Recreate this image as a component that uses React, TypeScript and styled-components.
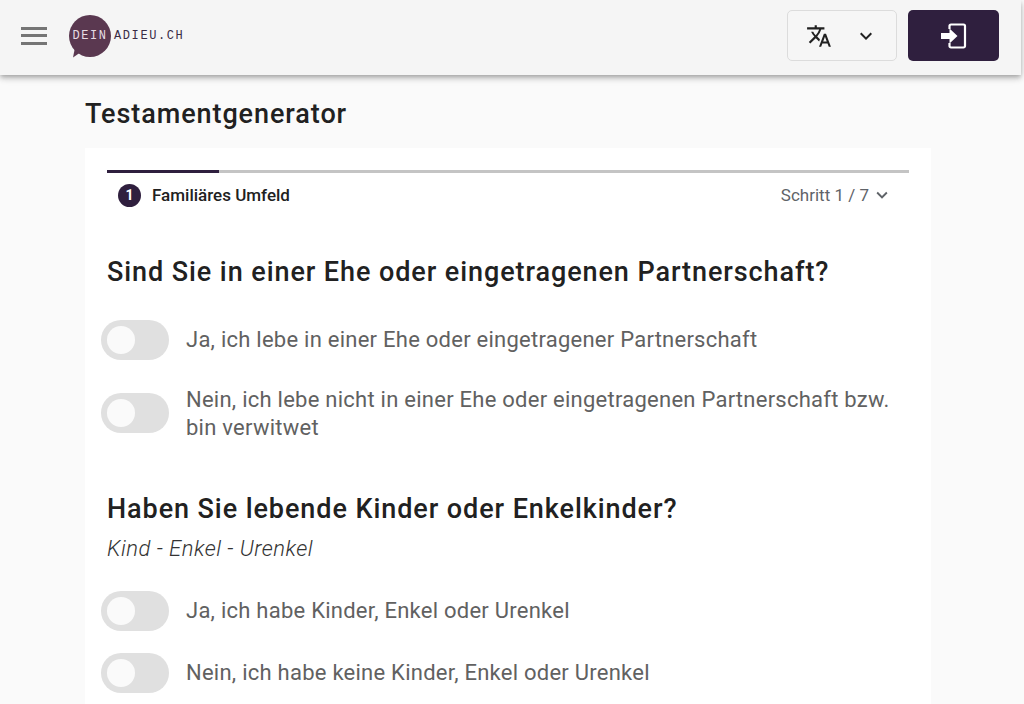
import React from "react";
import styled, { createGlobalStyle } from "styled-components";

const Global = createGlobalStyle`
  html, body { margin: 0; padding: 0; background: #fafafa; overflow: hidden; height: 704px; }
  body { font-family: Roboto, "Liberation Sans", sans-serif; }
`;
const Page = styled.div`width: 1024px; height: 704px; overflow: hidden; display: flex; flex-direction: column;`;
const Header = styled.header`
  width: 1021px; height: 75px; flex: none; background: #f5f5f5; display: flex; align-items: center;
  padding: 0 22px 4px 21px; box-sizing: border-box;
  box-shadow: 0 2px 4px -1px rgba(0,0,0,.2), 0 4px 5px 0 rgba(0,0,0,.14), 0 1px 10px 0 rgba(0,0,0,.12);
  position: relative;
`;
const Menu = styled.div`width: 26px; height: 18px; display: flex; flex-direction: column; justify-content: space-between; margin-right: 22px;`;
const MenuBar = styled.span`height: 3px; background: #757575; display: block;`;
const Logo = styled.div`display: flex; align-items: center; height: 42px; position: relative;`;
const Bubble = styled.div`
  width: 42px; height: 42px; border-radius: 50%; background: #5a3850; color: #e6dce3;
  font: 12px "Liberation Mono", monospace; letter-spacing: 1.6px;
  display: flex; align-items: center; justify-content: center; position: relative;
  &::after { content: ""; position: absolute; left: 4px; bottom: -1px; width: 9px; height: 9px; background: #5a3850; clip-path: polygon(0 100%, 100% 30%, 20% 0); }
`;
const LogoText = styled.span`
  font: 12px "Liberation Mono", monospace; letter-spacing: 1.6px; color: #3a2c45; margin-left: 3px;
`;
const Spacer = styled.div`flex: 1;`;
const LangButton = styled.button`
  width: 110px; height: 51px; box-sizing: border-box; border: 1px solid #dcdcdc; border-radius: 5px; background: #f6f6f6;
  display: flex; align-items: center; justify-content: space-between; padding: 0 18px 0 18px; margin-right: 11px; color: #212121;
`;
const LoginButton = styled.button`
  width: 91px; height: 51px; border: 0; border-radius: 5px; background: #2f1f3e; color: #fff;
  display: flex; align-items: center; justify-content: center; padding: 0;
`;
const Main = styled.main`flex: 1; padding: 0 93px 0 85px; display: flex; flex-direction: column; min-height: 0;`;
const Title = styled.h1`margin: 21px 0 16px; font-size: 27px; line-height: 36px; font-weight: 500; color: #212121; letter-spacing: .92px;`;
const Card = styled.section`background: #fff; padding: 22px 22px 0; flex: 1;`;
const Track = styled.div`height: 3px; background: #c4c4c4;`;
const Fill = styled.div`height: 3px; width: 112px; background: #2f1f3e;`;
const StepRow = styled.div`display: flex; align-items: center; height: 44px; padding: 0 16px 0 11px;`;
const StepBadge = styled.span`
  width: 23px; height: 23px; border-radius: 50%; background: #2f1f3e; color: #fff; font-size: 14px; font-weight: 700;
  display: flex; align-items: center; justify-content: center; margin-right: 11px;
`;
const StepName = styled.span`font-size: 17px; font-weight: 500; color: #212121; flex: 1;`;
const StepCount = styled.span`font-size: 17px; color: #5f6368; display: flex; align-items: center; gap: 2px;`;
const Question = styled.h2<{ $top: number }>`
  margin: ${(p) => p.$top}px 0 0; font-size: 27px; line-height: 34px; font-weight: 500; color: #212121; letter-spacing: .92px;
`;
const Hint = styled.p`margin: 9px 0 0; font-size: 22px; line-height: 28px; font-style: italic; font-weight: 300; color: #333; letter-spacing: .5px;`;
const Option = styled.label<{ $top: number }>`
  display: flex; align-items: flex-start; margin: ${(p) => p.$top}px 0 0 -6px; font-size: 22px; line-height: 28px; color: #616161; letter-spacing: .25px;
`;
const Toggle = styled.span`
  flex: none; width: 68px; height: 40px; border-radius: 20px; background: #e0e0e0; position: relative; margin-right: 17px;
  &::after { content: ""; position: absolute; left: 6px; top: 6px; width: 28px; height: 28px; border-radius: 50%; background: #fafafa; }
`;
const OptionText = styled.span`padding-top: 6px;`;
const OptionTextTop = styled.span`margin-top: -7px;`;

export default function App() {
  return (
    <Page>
      <Global />
      <Header>
        <Menu><MenuBar /><MenuBar /><MenuBar /></Menu>
        <Logo>
          <Bubble>DEIN</Bubble>
          <LogoText>ADIEU.CH</LogoText>
        </Logo>
        <Spacer />
        <LangButton aria-label="Sprache">
          <svg width="26" height="26" viewBox="0 0 24 24" fill="#212121">
            <path d="M12.87 15.07l-2.54-2.51.03-.03A17.52 17.52 0 0014.07 6H17V4h-7V2H8v2H1v2h11.17C11.5 7.92 10.44 9.75 9 11.35 8.07 10.32 7.3 9.19 6.69 8h-2c.73 1.63 1.73 3.17 2.98 4.56l-5.09 5.02L4 19l5-5 3.11 3.11.76-2.04zM18.5 10h-2L12 22h2l1.12-3h4.75L21 22h2l-4.5-12zm-2.62 7l1.62-4.33L19.12 17h-3.24z" />
          </svg>
          <svg width="24" height="24" viewBox="0 0 24 24" fill="#212121">
            <path d="M7.41 8.59L12 13.17l4.59-4.58L18 10l-6 6-6-6z" />
          </svg>
        </LangButton>
        <LoginButton aria-label="Anmelden">
          <svg width="30" height="30" viewBox="0 0 30 30" fill="none">
            <path d="M10.500 8V5A1.500 1.500 0 0112 3.500h12.500A1.500 1.500 0 0126 5v20a1.500 1.500 0 01-1.500 1.500H12a1.500 1.500 0 01-1.500-1.500v-3" stroke="#fff" strokeWidth="2.2" />
            <path d="M2 12h8.500V7.500L18.500 15l-8 7.500V18H2z" fill="#fff" />
          </svg>
        </LoginButton>
      </Header>
      <Main>
        <Title>Testamentgenerator</Title>
        <Card>
          <Track><Fill /></Track>
          <StepRow>
            <StepBadge>1</StepBadge>
            <StepName>Familiäres Umfeld</StepName>
            <StepCount>
              Schritt 1 / 7
              <svg width="22" height="22" viewBox="0 0 24 24" fill="#5f6368">
                <path d="M7.41 8.59L12 13.17l4.59-4.58L18 10l-6 6-6-6z" />
              </svg>
            </StepCount>
          </StepRow>
          <Question $top={38}>Sind Sie in einer Ehe oder eingetragenen Partnerschaft?</Question>
          <Option $top={31}><Toggle /><OptionText>Ja, ich lebe in einer Ehe oder eingetragener Partnerschaft</OptionText></Option>
          <Option $top={33}><Toggle /><OptionTextTop>Nein, ich lebe nicht in einer Ehe oder eingetragenen Partnerschaft bzw. bin verwitwet</OptionTextTop></Option>
          <Question $top={50}>Haben Sie lebende Kinder oder Enkelkinder?</Question>
          <Hint>Kind - Enkel - Urenkel</Hint>
          <Option $top={28}><Toggle /><OptionText>Ja, ich habe Kinder, Enkel oder Urenkel</OptionText></Option>
          <Option $top={22}><Toggle /><OptionText>Nein, ich habe keine Kinder, Enkel oder Urenkel</OptionText></Option>
        </Card>
      </Main>
    </Page>
  );
}
